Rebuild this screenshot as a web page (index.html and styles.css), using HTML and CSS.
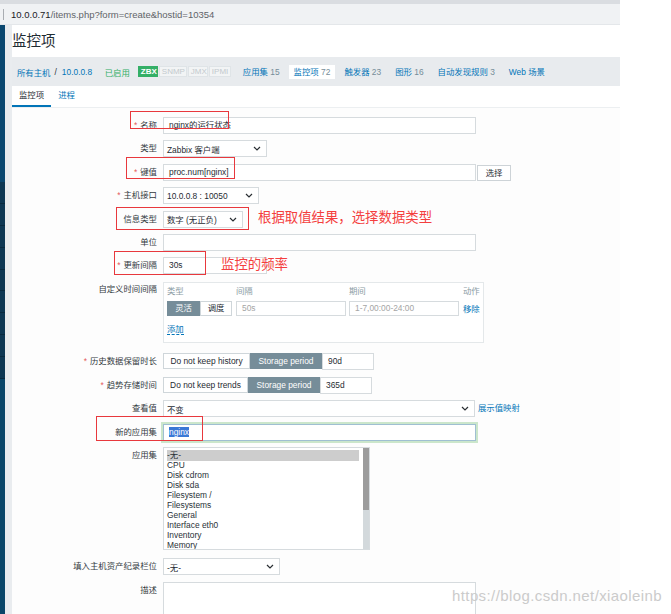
FILE: index.html
```html
<!DOCTYPE html>
<html lang="zh">
<head>
<meta charset="utf-8">
<title>监控项</title>
<link rel="stylesheet" href="styles.css">
</head>
<body>
<div class="browser">
  <div class="tabstrip"></div>
  <div class="addressbar"><span class="sep"></span><span class="host">10.0.0.71</span><span class="path">/items.php?form=create&amp;hostid=10354</span></div>
</div>
<div class="page">
  <aside class="sidebar">
    <div class="sb-top"></div>
    <div class="sb-menu"><div></div><div></div><div></div><div></div><div></div><div></div><div></div><div></div><div></div></div>
    <div class="sb-bottom"></div>
  </aside>
  <div class="gutter"></div>
  <main class="main">
    <header class="title"><h1>监控项</h1></header>
    <nav class="hostnav">
      <span class="link crumb">所有主机</span><span class="slash">/</span><span class="link crumb2">10.0.0.8</span>
      <span class="status">已启用</span>
      <span class="badges"><span class="badge zbx">ZBX</span><span class="badge off">SNMP</span><span class="badge off">JMX</span><span class="badge off">IPMI</span></span>
      <span class="navitem first"><span class="link">应用集</span> <span class="cnt">15</span></span>
      <span class="navitem active"><span class="link">监控项</span> <span class="cnt">72</span></span>
      <span class="navitem"><span class="link">触发器</span> <span class="cnt">23</span></span>
      <span class="navitem"><span class="link">图形</span> <span class="cnt">16</span></span>
      <span class="navitem"><span class="link">自动发现规则</span> <span class="cnt">3</span></span>
      <span class="navitem"><span class="link">Web 场景</span></span>
    </nav>
    <div class="tabs">
      <span class="tab active">监控项</span>
      <span class="tab link">进程</span>
    </div>
    <div class="form">
      <div class="row">
        <div class="lbl req">名称</div>
        <div class="input w313">nginx的运行状态</div>
      </div>
      <div class="row">
        <div class="lbl">类型</div>
        <div class="select w104"><span>Zabbix 客户端</span><svg class="chev" width="8" height="5" viewBox="0 0 8 5"><polyline points="1,1 4,4 7,1"/></svg></div>
      </div>
      <div class="row">
        <div class="lbl req">键值</div>
        <div class="input w313">proc.num[nginx]</div>
        <div class="btn">选择</div>
      </div>
      <div class="row">
        <div class="lbl req">主机接口</div>
        <div class="select w96"><span>10.0.0.8 : 10050</span><svg class="chev" width="8" height="5" viewBox="0 0 8 5"><polyline points="1,1 4,4 7,1"/></svg></div>
      </div>
      <div class="row">
        <div class="lbl">信息类型</div>
        <div class="select w80"><span>数字 (无正负)</span><svg class="chev" width="8" height="5" viewBox="0 0 8 5"><polyline points="1,1 4,4 7,1"/></svg></div>
      </div>
      <div class="row">
        <div class="lbl">单位</div>
        <div class="input w313"></div>
      </div>
      <div class="row">
        <div class="lbl req">更新间隔</div>
        <div class="input w104">30s</div>
      </div>
      <div class="row row-box">
        <div class="lbl">自定义时间间隔</div>
        <div class="intervals">
          <div class="ihead"><span class="c1">类型</span><span class="c2">间隔</span><span class="c3">期间</span><span class="c4">动作</span></div>
          <div class="irow">
            <div class="seg c1"><span class="b on w33">灵活</span><span class="b w32">调度</span></div>
            <div class="input small c2 ph">50s</div>
            <div class="input small c3 ph">1-7,00:00-24:00</div>
            <span class="link c4">移除</span>
          </div>
          <div class="add"><span class="link dashed">添加</span></div>
        </div>
      </div>
      <div class="row">
        <div class="lbl req">历史数据保留时长</div>
        <div class="seg"><span class="b w87">Do not keep history</span><span class="b on w72">Storage period</span></div>
        <div class="input w52">90d</div>
      </div>
      <div class="row">
        <div class="lbl req">趋势存储时间</div>
        <div class="seg"><span class="b w85">Do not keep trends</span><span class="b on w72">Storage period</span></div>
        <div class="input w52">365d</div>
      </div>
      <div class="row">
        <div class="lbl">查看值</div>
        <div class="select w312"><span>不变</span><svg class="chev" width="8" height="5" viewBox="0 0 8 5"><polyline points="1,1 4,4 7,1"/></svg></div>
        <span class="link maplink">展示值映射</span>
      </div>
      <div class="row">
        <div class="lbl">新的应用集</div>
        <div class="input w313 focus"><span class="selected">nginx</span></div>
      </div>
      <div class="row row-list">
        <div class="lbl">应用集</div>
        <div class="listbox">
          <div class="opts">
            <div class="opt sel">-无-</div>
            <div class="opt">CPU</div>
            <div class="opt">Disk cdrom</div>
            <div class="opt">Disk sda</div>
            <div class="opt">Filesystem /</div>
            <div class="opt">Filesystems</div>
            <div class="opt">General</div>
            <div class="opt">Interface eth0</div>
            <div class="opt">Inventory</div>
            <div class="opt">Memory</div>
          </div>
          <div class="scroll"><div class="thumb"></div><div class="track"></div></div>
        </div>
      </div>
      <div class="row">
        <div class="lbl">填入主机资产纪录栏位</div>
        <div class="select w117"><span>-无-</span><svg class="chev" width="8" height="5" viewBox="0 0 8 5"><polyline points="1,1 4,4 7,1"/></svg></div>
      </div>
      <div class="row">
        <div class="lbl">描述</div>
        <div class="textarea"></div>
      </div>
    </div>
  </main>
</div>

<div class="mark m1"></div>
<div class="mark m2"></div>
<div class="mark m3"></div>
<div class="mark m4"></div>
<div class="mark m5"></div>
<div class="note n1">根据取值结果，选择数据类型</div>
<div class="note n2">监控的频率</div>
<div class="watermark">https://blog.csdn.net/xiaoleinb</div>
</body>
</html>
```

FILE: styles.css
```css
* { box-sizing: border-box; }
html, body { margin: 0; padding: 0; }
body {
  width: 671px;
  height: 614px;
  overflow: hidden;
  position: relative;
  background: #ffffff;
  font-family: "Liberation Sans", "Noto Sans CJK SC", sans-serif;
  font-size: 8.4px;
  color: #1f2c33;
}

/* browser chrome */
.browser { width: 620px; }
.tabstrip { height: 4px; background: #dadde1; }
.addressbar {
  height: 21px;
  background: #f0f2f4;
  border-bottom: 1px solid #e4e7ea;
  display: flex;
  align-items: center;
  padding-left: 3px;
  font-size: 9.5px;
}
.sep { width: 1px; height: 11px; background: #a9adb2; margin-right: 7px; }
.host { color: #202124; }
.path { color: #5f6368; }

/* page */
.page { display: flex; height: 589px; }
.sidebar { width: 5px; display: flex; flex-direction: column; }
.sb-top { height: 157px; background: #0b4870; }
.sb-menu { height: 197px; background: #0e3854; display: flex; flex-direction: column; }
.sb-menu div { height: 21.9px; border-bottom: 1px solid #082a40; }
.sb-bottom { flex: 1; background: #0a4669; }
.gutter { width: 7px; background: #e9ecef; }
.main { width: 608px; background: #fdfdfd; }

.title { height: 32px; background: #ffffff; display: flex; align-items: center; }
.title h1 { margin: 0; font-size: 14.5px; font-weight: normal; line-height: 1; color: #1f2c33; }

.link { color: #0275b8; }
.hostnav {
  height: 29px;
  background: #e8ebee;
  display: flex;
  align-items: center;
  padding-left: 5px;
  white-space: nowrap;
}
.slash { margin-left: 4px; color: #1f2c33; }
.crumb2 { margin-left: 5px; }
.status { margin-left: 12.6px; color: #34af67; }
.badges { margin-left: 8px; display: flex; gap: 1px; }
.badge {
  height: 11px;
  line-height: 9px;
  padding: 0 2px;
  font-size: 8px;
  border: 1px solid #dfe4e7;
  color: #c2c9cd;
  background: #f2f4f5;
  text-align: center;
}
.badge.zbx { background: #34af67; border-color: #34af67; color: #ffffff; font-weight: bold; width: 20px; }
.badge:nth-child(2) { width: 28px; }
.badge:nth-child(3) { width: 20px; }
.badge:nth-child(4) { width: 22px; }
.navitem { padding: 0 5px; height: 14px; line-height: 14px; margin-left: 4px; }
.navitem.first { margin-left: 7px; }
.navitem.active { background: #ffffff; }
.cnt { color: #768d99; }

.tabs {
  height: 22px;
  background: #ffffff;
  display: flex;
  border-bottom: 1px solid #eceff1;
}
.tab { height: 21px; line-height: 19px; padding: 0 7px; border-bottom: 2px solid transparent; }
.tab.active { border-bottom-color: #0275b8; color: #1f2c33; }

/* form */
.form { padding-top: 9px; }
.row { display: flex; align-items: flex-start; margin-bottom: 6.4px; }
.row-box { margin-bottom: 10.6px; }
.row-list { margin-bottom: 8.4px; }
.lbl {
  width: 151px;
  flex-shrink: 0;
  padding-right: 6px;
  text-align: right;
  line-height: 17px;
  color: #333a3f;
  white-space: nowrap;
}
.lbl.req::before { content: "*"; color: #e45959; margin-right: 3px; }

.input {
  height: 17px;
  border: 1px solid #d6dbde;
  background: #ffffff;
  padding: 0 5px;
  line-height: 15px;
  white-space: nowrap;
  overflow: hidden;
}
.input.ph { color: #a5a5a5; }
.w313 { width: 313px; }
.w312 { width: 312px; }
.w104 { width: 104px; }
.w96 { width: 96px; }
.w80 { width: 80px; }
.w117 { width: 117px; }
.w52 { width: 52px; }

.select {
  height: 17px;
  border: 1px solid #d6dbde;
  background: #ffffff;
  padding: 0 3px;
  display: flex;
  align-items: center;
  justify-content: space-between;
  white-space: nowrap;
}
.chev { margin-right: 2px; flex-shrink: 0; }
.chev polyline { fill: none; stroke: #2a2f33; stroke-width: 1.2; }

.btn {
  margin-left: 1px;
  margin-top: 1px;
  width: 34px;
  height: 16px;
  border: 1px solid #cdd3d7;
  background: #ffffff;
  line-height: 14px;
  text-align: center;
  color: #1f2c33;
}
.maplink { margin-left: 3px; line-height: 17px; }

.focus { border-color: #9fbfd2; box-shadow: 0 0 0 2px #cbe6cb; }
.selected { background: #3a78d6; color: #ffffff; }

/* custom intervals */
.intervals {
  width: 321px;
  height: 61px;
  margin-top: 1px;
  border: 1px solid #e4e8ea;
  background: #ffffff;
  padding: 3px 0 0 3px;
}
.ihead { display: flex; line-height: 10px; color: #8a9ba4; }
.c1 { width: 65px; margin-right: 4px; }
.c2 { width: 110px; margin-right: 3px; }
.c3 { width: 110px; margin-right: 4px; }
.ihead .c1, .ihead .c2, .ihead .c3 { display: block; }
.irow { display: flex; margin-top: 5px; height: 15px; align-items: center; }
.input.small { height: 15px; line-height: 13px; }
.add { margin-top: 8px; line-height: 10px; }
.dashed { border-bottom: 1px dashed #0275b8; }

.seg { display: flex; }
.b {
  height: 16px;
  line-height: 14px;
  border: 1px solid #cfd6da;
  background: #ffffff;
  color: #1f2c33;
  text-align: center;
  white-space: nowrap;
}
.irow .b { height: 15px; line-height: 13px; }
.b.on { background: #768d99; border-color: #768d99; color: #ffffff; }
.w33 { width: 33px; }
.w32 { width: 32px; }
.w87 { width: 87px; }
.w85 { width: 85px; }
.w72 { width: 72px; }

/* listbox */
.listbox {
  width: 207px;
  height: 103px;
  border: 1px solid #d6dbde;
  background: #ffffff;
  display: flex;
}
.opts { flex: 1; padding: 2px 4px 0 3px; overflow: hidden; }
.opt { height: 10px; line-height: 10px; white-space: nowrap; color: #2a3238; }
.opt.sel { background: #cdcdcd; height: 11px; line-height: 11px; margin-bottom: -1px; }
.scroll { width: 6px; display: flex; flex-direction: column; }
.thumb { height: 62px; background: #9c9c9c; }
.track { flex: 1; background: #d3d9dc; }

.textarea {
  width: 313px;
  height: 60px;
  border: 1px solid #d6dbde;
  background: #ffffff;
}

/* annotations (overlay) */
.mark { position: absolute; border: 1.5px solid #e8383d; }
.m1 { left: 130px; top: 111px; width: 99px; height: 18px; }
.m2 { left: 126px; top: 157px; width: 109px; height: 22px; }
.m3 { left: 116px; top: 207px; width: 133px; height: 23px; }
.m4 { left: 114px; top: 251px; width: 92px; height: 24px; }
.m5 { left: 96px; top: 416px; width: 107px; height: 25px; }
.note {
  position: absolute;
  font-family: "Noto Sans CJK SC", sans-serif;
  font-size: 13.4px;
  line-height: 16px;
  color: #f43f3f;
  white-space: nowrap;
}
.n1 { left: 258px; top: 208px; }
.n2 { left: 221px; top: 255px; }
.watermark {
  position: absolute;
  left: 452px;
  top: 587px;
  font-family: "Liberation Sans", sans-serif;
  font-size: 15px;
  letter-spacing: 0.4px;
  line-height: 17px;
  color: #cbcbcb;
  white-space: nowrap;
}
```
